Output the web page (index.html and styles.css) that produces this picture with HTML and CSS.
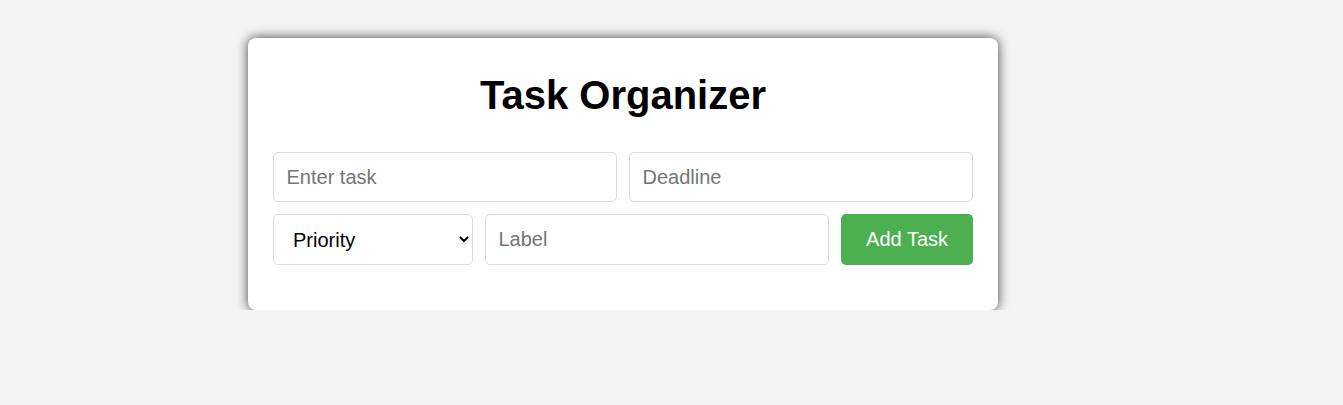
FILE: index.html
```html
<!DOCTYPE html>
<html lang="en">
<head>
<meta charset="utf-8">
<title>Task Organizer</title>
<link rel="stylesheet" href="styles.css">
</head>
<body>
<div class="card">
  <h1 class="title">Task Organizer</h1>
  <div class="row">
    <input class="field grow" type="text" placeholder="Enter task">
    <input class="field grow" type="text" placeholder="Deadline">
  </div>
  <div class="row row-tall">
    <select class="field select">
      <option>Priority</option>
      <option>High</option>
      <option>Medium</option>
      <option>Low</option>
    </select>
    <input class="field grow" type="text" placeholder="Label">
    <button class="btn">Add Task</button>
  </div>
</div>
</body>
</html>
```

FILE: styles.css
```css
html, body {
  margin: 0;
  padding: 0;
  background: #f4f4f4;
  font-family: "Liberation Sans", Arial, sans-serif;
}

body {
  padding: 38px 0 0 248px;
}

.card {
  box-sizing: border-box;
  width: 750px;
  background: #fff;
  border-radius: 8px;
  padding: 25px 25px 45px;
  box-shadow: 0 0 12px rgba(0, 0, 0, 0.75);
}

.title {
  margin: 9px 0 34px;
  font-size: 40px;
  line-height: 46px;
  font-weight: bold;
  text-align: center;
  color: #000;
}

.row {
  display: flex;
  gap: 12px;
  margin-bottom: 12px;
}

.row:last-child {
  margin-bottom: 0;
}

.field {
  box-sizing: border-box;
  height: 50px;
  padding: 0 12.5px;
  font-family: "Liberation Sans", Arial, sans-serif;
  font-size: 20px;
  color: #000;
  background: #fff;
  border: 1px solid #dcdcdc;
  border-radius: 5px;
  outline: none;
}

.row-tall .field,
.row-tall .btn {
  height: 51px;
}

.field::placeholder {
  color: #757575;
}

.grow {
  flex: 1 1 0;
  min-width: 0;
}

.select {
  flex: 0 0 200px;
  width: 200px;
  padding-left: 15px;
  padding-right: 10px;
}

.btn {
  flex: 0 0 auto;
  height: 51px;
  padding: 0 25px;
  border: none;
  border-radius: 5px;
  background: #4caf50;
  color: #fff;
  font-family: "Liberation Sans", Arial, sans-serif;
  font-size: 20px;
  cursor: pointer;
}
```
